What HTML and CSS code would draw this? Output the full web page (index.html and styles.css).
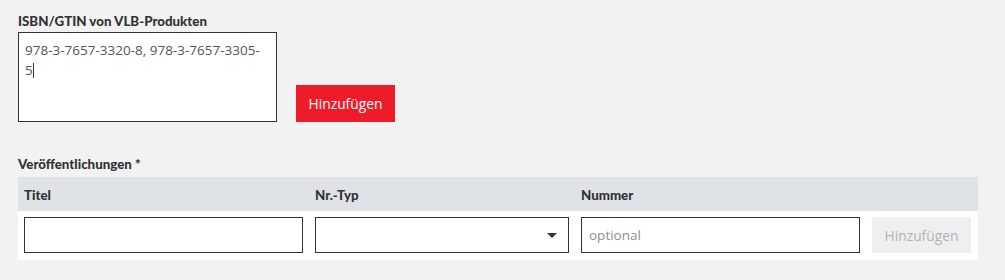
FILE: index.html
```html
<!DOCTYPE html>
<html lang="de">
<head>
    <meta charset="UTF-8">
    <title>VLB Produkte</title>
    <link rel="stylesheet" href="styles.css">
</head>
<body>
    <div class="form">
        <div class="isbn-row">
            <div class="field">
                <label class="label" for="isbn">ISBN/GTIN von VLB-Produkten</label>
                <div class="textarea" id="isbn">978-3-7657-3320-8, 978-3-7657-3305-<br>5<span class="caret"></span></div>
            </div>
            <button class="btn primary">Hinzufügen</button>
        </div>

        <div class="label pubs-label">Veröffentlichungen *</div>
        <div class="table">
            <div class="row head">
                <div class="cell">Titel</div>
                <div class="cell">Nr.-Typ</div>
                <div class="cell">Nummer</div>
                <div class="cell"></div>
            </div>
            <div class="row">
                <div class="cell"><input class="input" type="text"></div>
                <div class="cell">
                    <div class="select">
                        <span class="arrow"></span>
                    </div>
                </div>
                <div class="cell"><input class="input" type="text" placeholder="optional"></div>
                <div class="cell"><button class="btn disabled">Hinzufügen</button></div>
            </div>
        </div>
    </div>
</body>
</html>
```

FILE: styles.css
```css
body {
    margin: 0;
    background-color: #f2f2f2;
    font-family: "Open Sans", Arial, sans-serif;
    color: #333;
}
.form {
    padding: 12px 18px 0 18px;
}
.isbn-row {
    display: flex;
    align-items: flex-end;
    gap: 19px;
}
.label {
    display: block;
    font-family: Lato, "Open Sans", sans-serif;
    font-weight: 900;
    font-size: 13.3px;
    line-height: 18px;
    color: #333;
    margin-bottom: 2px;
}
.textarea {
    box-sizing: border-box;
    width: 259px;
    height: 90px;
    background: #fff;
    border: 1px solid #333;
    padding: 7px 6px;
    font-size: 13.5px;
    line-height: 20px;
    color: #555;
}
.caret {
    display: inline-block;
    width: 1px;
    height: 15px;
    background: #333;
    vertical-align: -3px;
}
.btn {
    box-sizing: border-box;
    height: 37px;
    width: 99px;
    border: none;
    font-family: "Open Sans", Arial, sans-serif;
    font-size: 13.8px;
    cursor: pointer;
}
.btn.primary {
    background-color: #ee1c29;
    color: #fff;
}
.btn.disabled {
    background-color: #eeeff1;
    color: #b3b3b3;
    height: 36px;
}
.pubs-label {
    margin-top: 33px;
    margin-bottom: 4px;
}
.table {
    width: 960px;
}
.row {
    display: grid;
    grid-template-columns: 291px 266px 291px 1fr;
    background: #fff;
}
.row.head {
    background: #dfe2e6;
    height: 34px;
    align-items: center;
}
.row.head .cell {
    font-family: Lato, "Open Sans", sans-serif;
    font-weight: 900;
    font-size: 13.3px;
    padding: 1px 6px 0 6px;
}
.cell {
    padding: 6px 6px 7px 6px;
}
.input, .select {
    box-sizing: border-box;
    display: block;
    width: 100%;
    height: 36px;
    border: 1px solid #333;
    background: #fff;
    margin: 0;
    padding: 0 7px;
    font-family: "Open Sans", Arial, sans-serif;
    font-size: 13.5px;
    color: #555;
    outline: none;
}
.input::placeholder {
    color: #8a8f96;
}
.select {
    display: flex;
    align-items: center;
    justify-content: flex-end;
    padding-right: 11px;
}
.arrow {
    width: 0;
    height: 0;
    border-left: 5px solid transparent;
    border-right: 5px solid transparent;
    border-top: 5px solid #333;
}
```
